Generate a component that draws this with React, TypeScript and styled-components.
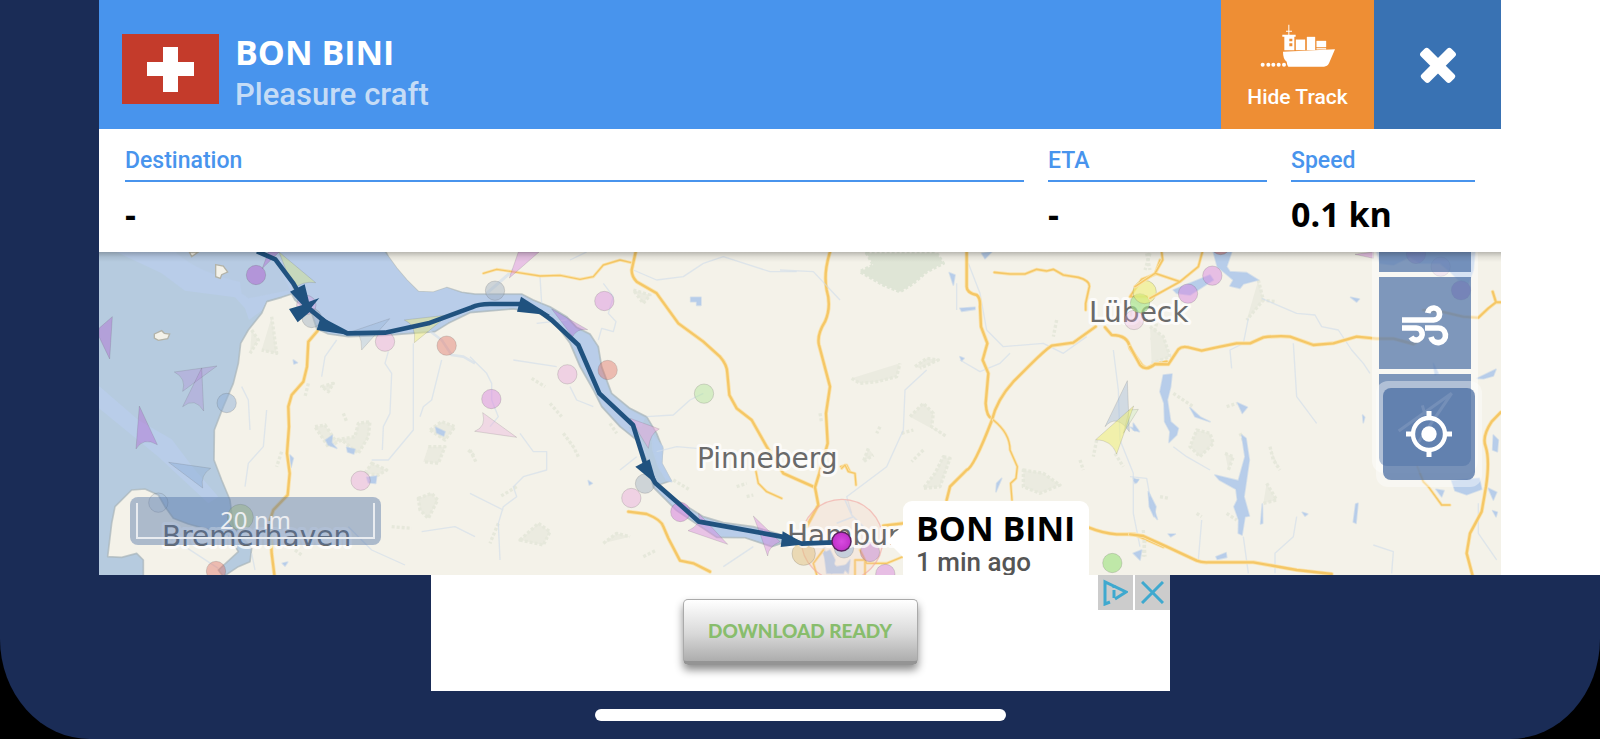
import React from "react";
import styled, { createGlobalStyle, css } from "styled-components";

const GlobalStyle = createGlobalStyle`
  * { box-sizing: border-box; }
  body { margin: 0; background: #000; }
  button { border: 0; padding: 0; font: inherit; cursor: pointer; }
`;

const ui = `Roboto, "Liberation Sans", sans-serif`;
const strong = `"Open Sans", "Noto Sans", sans-serif`;

const Screen = styled.div`
  min-height: 100vh;
  display: flex;
  flex-direction: column;
  background: #1a2c56;
  border-radius: 0 0 90px 90px / 0 0 100px 100px;
  overflow: hidden;
`;

const Stage = styled.div`
  display: flex;
`;

const Rail = styled.div<{ $light?: boolean }>`
  flex: none;
  width: 99px;
  background: ${(p) => (p.$light ? "#fff" : "#1a2c56")};
`;

const Main = styled.main`
  flex: 1;
  min-width: 0;
`;

const Header = styled.header`
  display: flex;
  height: 129px;
  background: #4894ed;
`;

const Vessel = styled.div`
  flex: 1;
  display: flex;
  align-items: center;
  gap: 16px;
  padding: 8px 23px 0;
`;

const VesselText = styled.div`
  padding-top: 8px;
`;

const VesselName = styled.h1`
  margin: 0;
  font: 700 34px/44px ${strong};
  color: #fff;
`;

const VesselType = styled.p`
  margin: 0;
  font: 500 31px/42px ${ui};
  color: #c5dcf6;
`;

const HeaderButton = styled.button<{ $tone: "track" | "close" }>`
  display: flex;
  flex-direction: column;
  align-items: center;
  color: #fff;
  font: 500 21px/28px ${ui};
  ${(p) =>
    p.$tone === "track"
      ? css`
          width: 153px;
          padding-top: 24px;
          gap: 15px;
          background: #ee8e34;
        `
      : css`
          width: 127px;
          justify-content: center;
          background: #3972b3;
        `}
`;

const Facts = styled.dl`
  display: grid;
  grid-template-columns: 1fr 219px 184px;
  gap: 24px;
  margin: 0;
  padding: 17px 26px 16px;
  background: #fff;
`;

const FactLabel = styled.dt`
  padding-bottom: 4px;
  border-bottom: 2px solid #4894ed;
  font: 500 23px/30px ${ui};
  color: #4894ed;
`;

const FactValue = styled.dd`
  margin: 10px 0 0;
  font: 700 34px/44px ${strong};
  color: #000;
`;

const MapArea = styled.section`
  position: relative;
  height: 323px;
  overflow: hidden;
  background: #f4f2e9;

  &::after {
    content: "";
    position: absolute;
    inset: 0 0 auto;
    height: 10px;
    background: linear-gradient(rgba(0, 0, 0, 0.24), rgba(0, 0, 0, 0.07) 50%, transparent);
    pointer-events: none;
  }
`;

const Chart = styled.svg`
  display: block;
  width: 100%;
  height: 100%;
`;

const ScaleBar = styled.div`
  position: absolute;
  left: 31px;
  bottom: 30px;
  width: 251px;
  padding: 6px;
  border-radius: 8px;
  background: rgba(77, 112, 165, 0.43);
`;

const ScaleRule = styled.div`
  height: 36px;
  border: 2px solid #e9ecf0;
  border-top: 0;
  text-align: center;
  font: 400 24px/34px "Noto Sans", sans-serif;
  color: #eceef2;
`;

const Popup = styled.div`
  position: absolute;
  left: 804px;
  top: 249px;
  padding: 5px 14px 8px 13px;
  border-radius: 9px;
  background: #fff;
  white-space: nowrap;

  &::before {
    content: "";
    position: absolute;
    right: 100%;
    top: 24px;
    border: solid transparent;
    border-width: 16px 16px 16px 0;
    border-right-color: #fff;
  }
`;

const PopupName = styled.strong`
  display: block;
  font: 700 34px/44px ${strong};
  color: #000;
`;

const PopupAge = styled.span`
  display: block;
  font: 500 26px/24px ${ui};
  color: #555;
`;

const Tools = styled.div`
  position: absolute;
  top: -79px;
  right: 23px;
  display: flex;
  flex-direction: column;
  gap: 5px;
  padding: 7px;
  border-radius: 12px;
  background: rgba(255, 255, 255, 0.45);
`;

const ToolButton = styled.button`
  display: grid;
  place-items: center;
  width: 92px;
  height: 92px;
  background: rgba(68, 104, 160, 0.68);

  &:last-child {
    border-radius: 0 0 8px 8px;
  }
`;

const LocateHolder = styled(Tools)`
  top: 129px;
  right: 19px;
  background: rgba(255, 255, 255, 0.4);

  ${ToolButton} {
    border-radius: 8px;
    background: rgba(68, 104, 160, 0.72);
  }
`;

const Footer = styled.footer`
  flex: 1;
  display: flex;
  flex-direction: column;
  align-items: center;
  gap: 18px;
  padding-bottom: 18px;
`;

const Ad = styled.aside`
  position: relative;
  width: 739px;
  max-width: 100%;
  padding: 24px 0 26px;
  display: flex;
  justify-content: center;
  background: #fff;
`;

const AdButton = styled.button`
  width: 235px;
  height: 66px;
  border: 1px solid #aaa;
  border-bottom: 4px solid #949494;
  border-radius: 5px;
  background: linear-gradient(#fff, #d9d9d9 55%, #adadad);
  box-shadow: 0 5px 8px rgba(0, 0, 0, 0.45);
  color: #88bd6c;
  font: 900 19px/24px Lato, sans-serif;
`;

const AdOptions = styled.div`
  position: absolute;
  top: 0;
  right: 0;
  display: flex;
  gap: 2px;
`;

const AdOption = styled.button`
  display: grid;
  place-items: center;
  width: 35px;
  height: 35px;
  background: #ccc;
`;

const HomeBar = styled.div`
  width: 411px;
  height: 12px;
  border-radius: 6px;
  background: #fff;
`;

const Flag = () => (
  <svg width="97" height="70" viewBox="0 0 97 70" role="img" aria-label="Switzerland">
    <rect width="97" height="70" fill="#c43b2b" />
    <path d="M41 13h15v15h16v14H56v16H41V42H25V28h16z" fill="#fff" />
  </svg>
);

const ShipIcon = () => (
  <svg width="76" height="44" viewBox="179 70 228 132" fill="#fff" aria-hidden="true">
    <path d="M248 153L404 146L386 188Q381 198 371 198H264Q260 193 259 183Q248 176 248 153Z" />
    <path d="M252 108H282V149H252ZM246 102H286V108H246ZM264 72H267V102H264ZM257 90H275V93H257Z" />
    <path d="M287 117H314V148H287ZM320 109H344V148H320ZM349 121H377V139H349ZM349 143H377V146H349Z" stroke="#fff" strokeWidth="1" />
    <path d="M267 114H276V122H267ZM267 128H276V137H267Z" fill="#ee8e34" />
    {[187, 204, 219, 235, 251].map((x) => (
      <circle key={x} cx={x} cy="192" r="6" />
    ))}
  </svg>
);

const CloseIcon = () => (
  <svg width="38" height="38" viewBox="-19 -19 38 38" fill="#fff" aria-hidden="true">
    <rect x="-21" y="-5" width="42" height="11" rx="3" transform="rotate(45)" />
    <rect x="-21" y="-5" width="42" height="11" rx="3" transform="rotate(-45)" />
  </svg>
);

const WindIcon = () => (
  <svg width="50" height="50" viewBox="809 174 150 150" fill="none" stroke="#fff" strokeWidth="17" aria-hidden="true">
    <path d="M815 240H910A18 18 0 1 0 892 219" />
    <path d="M815 264H856A18 18 0 1 1 842 291" />
    <path d="M884 264H922A22 22 0 1 1 902 291" />
  </svg>
);

const HeadingIcon = () => (
  <svg width="56" height="58" viewBox="797 455 168 174" fill="none" stroke="#fff" strokeOpacity=".8" strokeWidth="9" aria-hidden="true">
    <path d="M802 575L961 462L852 622M873 498L882 528" />
  </svg>
);

const LocateIcon = () => (
  <svg width="46" height="46" viewBox="828 513 138 138" aria-hidden="true">
    <circle cx="897" cy="582" r="48" fill="none" stroke="#fff" strokeWidth="13" />
    <circle cx="897" cy="582" r="23" fill="#fff" />
    <path d="M897 513V538M897 626V651M828 582H853M941 582H966" stroke="#fff" strokeWidth="15" />
  </svg>
);

const AdInfoIcon = () => (
  <svg width="26" height="27" viewBox="0 0 26 27" fill="none" stroke="#3fa9cf" strokeWidth="3" aria-hidden="true">
    <path d="M8 23L3 25V3L24 13L13 20" />
    <path d="M12 11V19M12 6V9" />
  </svg>
);

const AdCloseIcon = () => (
  <svg width="23" height="23" viewBox="0 0 23 23" stroke="#3fa9cf" strokeWidth="3" aria-hidden="true">
    <path d="M1 1L22 22M22 1L1 22" />
  </svg>
);

/* Chart panels: each has its own origin and is drawn at three units to the pixel. */
const Panel = ({ x, children }: { x: number; children: React.ReactNode }) => (
  <g transform={`translate(${x} 240) scale(.33333)`}>{children}</g>
);

const tones = {
  violet: "#b05fd0",
  pink: "#d98ae0",
  rose: "#e8a8dc",
  red: "#e0685a",
  green: "#a8e48c",
  lime: "#d6e684",
  yellow: "#eeee78",
  blue: "#8fb0d8",
  grey: "#9fb0c0",
  tan: "#e0bf80",
};
type Tone = keyof typeof tones;

const Dot = ({ x, y, tone, o = 0.45, r = 29 }: { x: number; y: number; tone: Tone; o?: number; r?: number }) => (
  <circle cx={x} cy={y} r={r} fill={tones[tone]} fillOpacity={o} stroke="#555" strokeOpacity=".3" strokeWidth="2" />
);

const Ship = ({ d, tone, o = 0.45 }: { d: string; tone: Tone; o?: number }) => (
  <path d={d} fill={tones[tone]} fillOpacity={o} stroke="#555" strokeOpacity=".25" strokeWidth="2" />
);

const Road = ({ d, w = 9 }: { d: string; w?: number }) => (
  <g fill="none" strokeLinejoin="round" strokeLinecap="round">
    <path d={d} stroke="#fae3ad" strokeWidth={w + 3} />
    <path d={d} stroke="#f5c766" strokeWidth={w - 2} />
  </g>
);

const Stream = ({ d, w = 4 }: { d: string; w?: number }) => (
  <path d={d} fill="none" stroke="#cfdceb" strokeOpacity=".6" strokeWidth={w} strokeLinejoin="round" />
);

const Lake = ({ d }: { d: string }) => (
  <path d={d} fill="#b7cdea" stroke="#b7cdea" strokeOpacity=".5" strokeWidth="5" strokeLinejoin="round" />
);

const Wood = ({ d, dark }: { d: string; dark?: boolean }) => (
  <path
    d={d}
    fill={dark ? "#dfe5d6" : "#ebebe0"}
    stroke={dark ? "#dfe5d6" : "#e6e8db"}
    strokeWidth="10"
    strokeDasharray="9 6"
    strokeLinejoin="round"
  />
);

const Line = ({ d, w = 12 }: { d: string; w?: number }) => (
  <path d={d} fill="none" stroke="#20527f" strokeWidth={w} strokeLinejoin="round" />
);

const City = ({ x, y, children }: { x: number; y: number; children: string }) => (
  <text
    x={x}
    y={y}
    fontFamily="'DejaVu Sans', sans-serif"
    fontSize="28"
    fill="#6a6a6a"
    stroke="#fff"
    strokeOpacity=".75"
    strokeWidth="6"
    strokeLinejoin="round"
    paintOrder="stroke"
  >
    {children}
  </text>
);

const SeaChart = () => (
  <Chart viewBox="99 252 1402 323" preserveAspectRatio="xMidYMid slice" role="img" aria-label="Vessel track on the Elbe">
    <defs>
      <radialGradient id="pin">
        <stop offset="0" stopColor="#d84be0" />
        <stop offset="1" stopColor="#c030c8" />
      </radialGradient>
    </defs>
    <rect x="99" y="252" width="1402" height="323" fill="#f4f2e9" />

    <Panel x={95}>
      <path
        d="M0 20H865L880 50L905 85L935 120L970 155L1015 157L1055 143L1100 157L1140 162H1280L1315 180L1365 200L1415 230L1445 262L1485 282L1510 320L1520 380L1550 460L1605 505L1655 530L1685 580L1703 625L1700 670L1728 722L1690 735L1745 780L1825 830L1885 848L1975 860L2045 880L2090 900L2030 920L1950 893L1865 892L1805 852L1745 812L1675 742L1655 660L1625 600L1575 560L1520 500L1495 450L1455 380L1425 310L1375 242L1325 217L1255 207L1125 218L1060 250L1020 275L870 286L760 290L700 282L665 266L650 220L600 180L590 162L560 172L515 185L500 220L460 270L437 310L430 370L415 430L385 500L358 570L357 660L380 720L405 780L415 860L470 925L465 965L430 980L385 1010L370 990L430 935L400 885L280 852L235 835L210 800L190 765L150 747L110 750L60 800L50 850L38 950L80 952L125 940L145 960V1010H0Z"
        fill="#b6cbdf"
        stroke="#a9b5b9"
        strokeOpacity=".7"
        strokeWidth="5"
        strokeLinejoin="round"
      />
      <path
        d="M110 34H865L880 50L905 85L935 120L970 155L1015 157L1055 143L1100 159L1140 166H1280L1315 184L1365 204L1413 234L1443 266L1483 286L1506 320L1516 380L1546 462L1600 507L1650 534L1640 560L1600 560L1640 600L1670 690L1680 735L1740 784L1820 832L1880 852L1970 864L2040 884L2020 912L1950 890L1865 888L1805 848L1745 808L1679 740L1659 660L1629 600L1579 558L1524 498L1499 448L1459 378L1429 308L1379 240L1327 213L1255 203L1125 214L1060 246L1020 271L870 282L760 286L700 278L669 262L654 220L604 176L590 158L560 168L515 181L500 212L462 240L450 205L420 172L270 152L200 100L60 34Z"
        fill="#b9cde9"
      />
      <path d="M110 34H540L560 100L585 150L460 175L440 160L425 60L450 130Q300 95 240 34Z" fill="#b6cbdf" opacity=".55" />
      <path d="M12 438L130 540L230 598L300 690L370 770L340 790L190 650L12 505Z" fill="#b9cde9" />
      <g fill="#f4f2e9" stroke="#b3b3a8" strokeWidth="4">
        <path d="M362 74L385 78L398 96L380 104L376 115L362 110Z" />
        <path d="M178 282L200 272L208 280L224 282L218 296L190 301L178 294Z" />
        <path d="M283 36H310L290 50Z" />
      </g>
      <Wood d="M470 270L490 300L465 340M530 230L545 340L500 330" />
      <Wood d="M680 440L715 430L700 455ZM640 430L630 470M660 560L690 555L720 600L780 590L790 550L825 545L820 590L790 640L740 600L700 620ZM745 520L755 545" />
      <Wood d="M560 635L545 680M830 670L875 690L850 705L810 700ZM970 775L1010 760L1028 780L1000 835L975 810ZM1005 570L1040 545L1080 560L1050 600ZM1000 620L1050 620L1030 670L985 665M1120 630L1140 650M890 860L950 865M600 930L620 945" />
      <Lake d="M692 600L712 586L710 608L725 625L700 615ZM755 622L780 628L776 642L758 636ZM1022 562L1050 575L1046 588L1025 578ZM815 712L845 708L842 730L820 728ZM595 360L607 368L597 372ZM585 645L595 655L588 682ZM562 970L578 966L570 978Z" />
      <Stream d="M725 300L690 350L680 410M880 335L870 370L890 400L885 520L865 560L862 630M955 310V570L880 660H830M1040 360L1010 480L985 500L975 530M440 440L460 480L465 570M515 510L505 620L460 670L450 740M270 920L370 985M470 940L480 990M760 860L830 930L930 975M980 875L1080 860L1140 890" />
      <Stream d="M1000 270L1040 300L1070 345L1105 350L1140 370" w={8} />
      <Road d="M668 272L640 305L636 380L625 425L590 465L580 500L582 560L576 640L584 700L578 765L535 810L525 840L530 940L538 1004" />
      <Dot x={483} y={105} tone="violet" o={0.5} />
      <Dot x={395} y={489} tone="blue" o={0.5} />
      <Dot x={650} y={234} tone="grey" />
      <Dot x={634} y={195} tone="pink" o={0.3} />
      <Dot x={870} y={305} tone="rose" />
      <Dot x={1055} y={317} tone="red" o={0.4} />
      <Dot x={797} y={722} tone="rose" />
      <Dot x={363} y={993} tone="red" o={0.4} />
      <Dot x={190} y={788} tone="blue" o={0.2} />
      <Dot x={436} y={832} tone="lime" o={0.6} r={39} />
      <Ship tone="lime" d="M552 36L662 128Q620 122 596 148Z" />
      <Ship tone="violet" d="M502 85L520 36H552Z" o={0.4} />
      <Ship tone="violet" d="M12 265L52 230L44 357L12 290Z" o={0.4} />
      <Ship tone="violet" d="M238 396L366 378L263 454Q275 415 238 396Z" o={0.2} />
      <Ship tone="violet" d="M320 384L326 513Q300 470 263 500Z" o={0.2} />
      <Ship tone="violet" d="M133 498L187 614Q145 590 123 627Z" o={0.4} />
      <Ship tone="blue" d="M221 667L347 685Q315 705 323 744Z" />
      <Ship tone="blue" d="M884 236L800 330Q800 270 770 275Z" o={0.3} />
      <Ship tone="yellow" d="M928 240L1060 225L958 308Q965 255 928 240Z" />
    </Panel>

    <Panel x={470}>
      <Wood d="M490 150L540 165L520 190ZM185 415L225 440M240 490L275 530M280 580L310 620L325 650M420 550L440 580M0 630L20 670M610 720L660 750M800 740L830 730M830 770L850 765M150 900L205 850L240 875L220 915ZM400 910L440 880L480 890M140 740L90 770M85 850L60 910M520 950L560 930" />
      <Lake d="M662 172H693V196H680V185H662ZM545 580L578 620L575 670L605 725L590 722L565 680L548 630ZM355 722L367 730L358 735Z" />
      <Lake d="M1060 920L1075 960L1100 980L1130 975L1120 1000H1070Z" />
      <Stream d="M0 350L50 400L65 430V480L85 530L60 560M150 580L190 635L230 635V690L160 710L130 740L140 770L100 800L85 850L90 960M400 130L430 170L415 220L438 245L430 275L395 265L385 300M490 90L560 120L640 110L700 70L760 50L900 95H980M530 530L610 525L660 480L700 460M560 635L620 620L680 625M200 250L290 240M130 360L260 380M300 440L320 480L370 500M0 760L100 810M450 690L500 650M210 110L215 190M760 980L850 920M300 60L350 36" />
      <Stream d="M50 160L130 90" w={9} />
      <Road w={6} d="M40 100L80 88L140 97L210 108L270 106L330 118L370 110L400 75L450 60L484 68" />
      <Road d="M497 36L485 90Q485 110 500 125L560 160L625 250L700 305L750 350Q772 375 772 400L778 465L800 505L845 540L890 620L940 700L1035 742" />
      <Road d="M1080 36Q1060 100 1070 150Q1085 200 1065 245Q1040 285 1047 315L1080 440L1068 520L1073 610L1048 700L1035 742L1045 795L1010 860" />
      <Road w={6} d="M858 695L865 730L890 755L935 775" />
      <Road d="M475 815L530 822Q575 840 580 860L595 895L630 962L670 970L720 995" />
      <Road w={6} d="M1112 680L1130 675L1140 695" />
      <Dot x={75} y={152} tone="grey" />
      <Dot x={403} y={183} tone="pink" />
      <Dot x={292} y={403} tone="rose" />
      <Dot x={413} y={390} tone="red" o={0.4} />
      <Dot x={64} y={477} tone="pink" o={0.5} />
      <Dot x={702} y={461} tone="green" o={0.4} />
      <Dot x={525} y={731} tone="grey" />
      <Dot x={484} y={774} tone="rose" />
      <Dot x={631} y={816} tone="pink" o={0.6} />
      <Ship tone="pink" d="M118 114L145 36H207Z" />
      <Ship tone="violet" d="M245 207L353 269Q320 265 308 290Z" o={0.35} />
      <Ship tone="rose" d="M38 518L140 592L14 574Q50 560 38 518Z" o={0.35} />
      <Ship tone="rose" d="M480 535L568 567Q540 580 535 625Z" o={0.5} />
      <Ship tone="pink" d="M686 820L773 913L654 872Q695 855 686 820Z" />
      <Ship tone="pink" d="M850 828L930 905Q895 920 893 948L870 880Z" />
    </Panel>

    <Panel x={780}>
      <Wood dark d="M260 40L470 40L490 70L440 95L400 130L360 155L310 135L240 95L280 75Z" />
      <Wood d="M215 415L240 430L290 425L350 410L360 370M405 380L440 355L475 360L420 385M390 530L430 490L460 520L455 560L500 590M365 580L400 570M265 625L250 665L280 645M300 560L290 580M430 630L395 665M490 650L510 655L480 740L430 745L465 700ZM730 690L790 700L840 735L780 760L730 740ZM900 660L910 690M950 600L940 650M830 240L820 290M1100 40L1110 90M1130 250L1115 300M1005 640L1030 680M120 520L125 550M1095 900L1090 950" />
      <Lake d="M508 98L525 105L520 135ZM540 205L585 202V208L545 214ZM605 40L635 36L615 56ZM650 730L665 715L648 755ZM1105 755L1128 800L1122 830L1108 800ZM1060 715L1075 720L1065 730ZM1060 550L1078 575L1060 570ZM540 350L552 355L545 362ZM1060 940L1085 930L1080 960Z" />
      <Stream d="M565 70L600 160L620 270L670 320L790 310L850 340L920 290M690 340L660 370L600 395L540 360M440 390L375 450L370 570L320 680L200 770L215 820M1000 330L1015 450L1020 600L1060 700V820L1080 920M0 90L100 95L180 180M530 130V210" />
      <Road d="M560 36V140Q560 158 590 165Q602 175 600 200L603 260L622 310L608 360L625 400L617 490Q620 530 635 535" />
      <Road d="M500 780L510 740L560 690Q580 685 636 540Q650 480 700 425L750 375Q795 330 815 317L880 308L947 260" />
      <Road w={6} d="M640 540Q690 580 690 630L712 680L708 715L692 730L696 780" />
      <Road w={7} d="M643 97L690 102H735L770 88L800 93L820 88L850 105L895 112Q930 122 928 140L917 190V210" />
      <Road d="M975 262L995 285Q1045 285 1050 325L1085 375Q1098 388 1108 382L1125 372L1160 365" />
      <Road d="M1100 170H1050L1085 118L1125 103L1140 60" w={7} />
      <Road w={6} d="M185 685L195 675L205 695L225 700L228 735" />
      <Road d="M310 857L369 850M925 862Q970 880 1010 883H1065L1150 920" />
      <Road w={6} d="M130 930L100 970L110 1004M240 930L260 970H320L369 950M225 1004V960H255V1004" />
      <Lake d="M130 940L150 930L165 960L155 1000L145 970ZM190 985L210 960L205 1000Z" />
      <circle cx="186" cy="900" r="122" fill="#f6c9bc" fillOpacity=".22" stroke="#f2a5a0" strokeOpacity=".6" strokeWidth="4" />
      <Stream d="M195 780L215 825L250 860M170 850L220 830" w={5} />
      <Dot x={71} y={941} tone="tan" r={35} o={0.5} />
      <Dot x={192} y={925} tone="blue" />
      <Dot x={270} y={936} tone="violet" o={0.35} />
      <Dot x={316} y={1002} tone="pink" o={0.5} />
      <Dot x={997} y={969} tone="green" o={0.7} />
      <Ship tone="blue" d="M1042 422L1048 575Q1010 520 975 560Z" o={0.35} />
      <Ship tone="green" d="M1048 510L1075 508L1030 580Z" o={0.2} />
    </Panel>

    <City x={697} y={468}>Pinneberg</City>
    <City x={787} y={545}>Hamburg</City>
    <City x={1089} y={322}>Lübeck</City>
    <City x={162} y={546}>Bremerhaven</City>

    <Panel x={780}>
      <Ship tone="yellow" d="M1061 498L1010 642Q995 600 947 599Z" o={0.55} />
      <Dot x={1062} y={240} tone="rose" o={0.3} />
      <Dot x={1080} y={190} tone="green" o={0.7} />
      <Dot x={1094} y={156} tone="yellow" r={35} o={0.6} />
    </Panel>

    <Panel x={1130}>
      <Wood d="M385 120L400 180L350 240M395 180L440 185M60 260L100 290L120 350L65 370M130 460L190 500M200 570L240 580L250 610L210 650L180 620ZM285 640L310 650L295 690M420 620L430 660L450 690M410 730L440 780L400 790M330 580L350 620M290 820L320 840M290 500L320 490M90 770L115 775M40 870L45 950M200 820L215 830M60 40L45 90" />
      <Lake d="M250 36H305L290 80L300 95L350 98L385 120L340 132L330 145L300 138L310 120L280 95L262 80ZM130 150L240 105L250 120L180 165L140 160Z" />
      <Lake d="M100 405L126 402L122 440L112 480L122 545L145 565L140 585L117 607L120 575L104 545L102 490L90 455ZM180 503L212 532L240 545L195 530ZM322 488L352 502L337 520ZM255 705L325 722L345 650L335 585L348 595L358 660L348 730L342 770L358 828L345 830L336 885L325 880L326 840L312 800L322 780L318 748L268 720ZM677 792L684 790L678 850L670 846ZM517 817L533 822L525 828ZM662 172L688 177L680 186ZM115 882H136L122 890ZM258 950L288 938L290 952L262 958ZM57 760L82 838L75 830ZM397 792L398 850L392 852ZM12 722L26 718L20 728ZM2 562L22 570L14 572ZM698 525L704 532L700 548ZM910 370L925 400L915 405ZM1042 415L1098 388L1090 408L1060 416ZM1090 585L1105 600L1102 635L1088 630ZM965 722L1048 715L1055 748L1010 764L975 752ZM1075 745L1100 757L1090 780ZM1088 812L1102 817L1098 830ZM918 748L942 752L935 770Z" />
      <Lake d="M740 36H1035L1030 90L1015 130L985 120L960 95L930 70H870L840 50L790 75L750 70Z" />
      <Stream d="M355 235L340 310L300 330L305 385M395 175L500 220L555 225L575 260L625 270L665 330L700 370L720 400M490 310L500 470L560 550M130 620L170 650L240 690M0 710L50 715L60 770M215 840L205 960M500 830L490 890L435 940V1000M730 915L790 935L785 1000M1045 790V880L1100 960M340 890L355 1000" />
      <Road d="M0 320L30 375Q48 395 75 372L115 373L145 328Q155 318 175 322L215 332L260 322L320 310H360L400 292Q450 286 480 290L550 315L610 310L680 290L740 296H790L850 312L870 300" />
      <Road w={7} d="M95 36L98 60L75 100L150 125L205 80L217 36M75 100L15 140M150 125L60 175" />
      <Road d="M880 210L940 216L1000 230L1045 233L1075 205L1098 187L1088 155M1098 187H1112" w={8} />
      <Road d="M1112 517L1085 545Q1055 590 1067 620Q1080 660 1068 740L1055 815L1020 880L1010 940L1027 1004" />
      <Road w={6} d="M862 680L880 725L895 740L935 795H960" />
      <Road d="M0 883L40 888L110 920L200 962Q215 968 235 967H370L500 990L605 1002" />
      <Dot x={174} y={161} tone="pink" o={0.5} />
      <Dot x={247} y={107} tone="pink" o={0.5} />
      <Dot x={272} y={15} tone="red" />
      <Dot x={993} y={151} tone="violet" o={0.7} />
      <Dot x={858} y={42} tone="violet" o={0.5} />
      <Dot x={932} y={80} tone="violet" o={0.2} />
      <Ship tone="pink" d="M675 43L730 36V55Z" />
    </Panel>

    <Panel x={95}>
      <Line d="M486 34L541 58L595 130L635 200L690 245L757 280L870 278L1000 250L1130 202Q1150 192 1185 192H1280L1335 215L1370 240L1450 315L1513 460L1614 555L1650 670L1680 728L1745 785L1812 845L2060 890L2120 911L2215 907" w={14} />
      <g fill="#20527f">
        <path d="M585 155L629 133L642 185L673 174L645 208L690 250L645 215L608 247L582 207L622 195Z" />
        <path d="M678 228L757 284L665 270Z" />
        <path d="M1278 170L1366 226L1266 215Z" />
        <path d="M1621 680L1664 658L1686 734Z" />
        <path d="M2063 874L2132 913L2057 921Z" />
      </g>
    </Panel>
    <circle cx="841.5" cy="541.5" r="9.5" fill="url(#pin)" stroke="#5a2560" strokeWidth="1.500" />
  </Chart>
);

const facts = [
  { label: "Destination", value: "-" },
  { label: "ETA", value: "-" },
  { label: "Speed", value: "0.1 kn" },
];

export default function App() {
  return (
    <>
      <GlobalStyle />
      <Screen>
        <Stage>
          <Rail />
          <Main>
            <Header>
              <Vessel>
                <Flag />
                <VesselText>
                  <VesselName>BON BINI</VesselName>
                  <VesselType>Pleasure craft</VesselType>
                </VesselText>
              </Vessel>
              <HeaderButton $tone="track">
                <ShipIcon />
                Hide Track
              </HeaderButton>
              <HeaderButton $tone="close" aria-label="Close">
                <CloseIcon />
              </HeaderButton>
            </Header>
            <Facts>
              {facts.map((f) => (
                <div key={f.label}>
                  <FactLabel>{f.label}</FactLabel>
                  <FactValue>{f.value}</FactValue>
                </div>
              ))}
            </Facts>
            <MapArea>
              <SeaChart />
              <ScaleBar>
                <ScaleRule>20 nm</ScaleRule>
              </ScaleBar>
              <Popup>
                <PopupName>BON BINI</PopupName>
                <PopupAge>1 min ago</PopupAge>
              </Popup>
              <Tools>
                <ToolButton aria-label="Layers" />
                <ToolButton aria-label="Wind">
                  <WindIcon />
                </ToolButton>
                <ToolButton aria-label="Heading">
                  <HeadingIcon />
                </ToolButton>
              </Tools>
              <LocateHolder>
                <ToolButton aria-label="My location">
                  <LocateIcon />
                </ToolButton>
              </LocateHolder>
            </MapArea>
          </Main>
          <Rail $light />
        </Stage>
        <Footer>
          <Ad>
            <AdButton>DOWNLOAD READY</AdButton>
            <AdOptions>
              <AdOption aria-label="Ad information">
                <AdInfoIcon />
              </AdOption>
              <AdOption aria-label="Close ad">
                <AdCloseIcon />
              </AdOption>
            </AdOptions>
          </Ad>
          <HomeBar />
        </Footer>
      </Screen>
    </>
  );
}
